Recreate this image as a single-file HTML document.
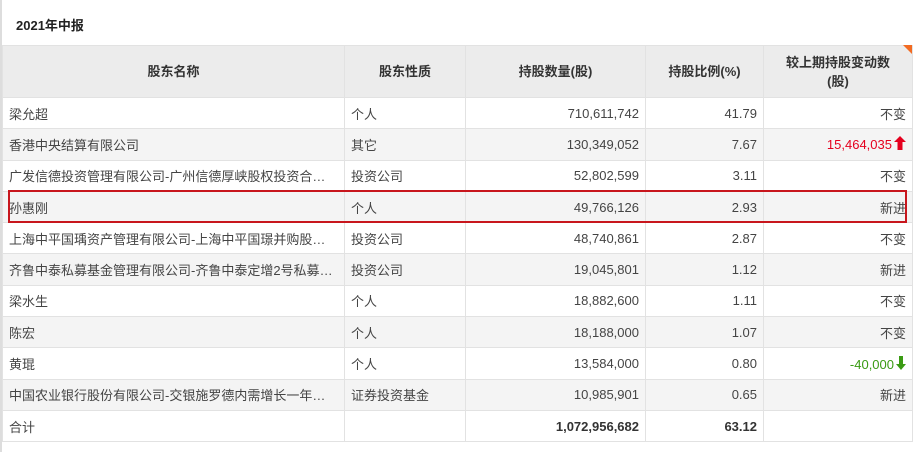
<!DOCTYPE html>
<html><head><meta charset="utf-8"><style>
body{margin:0;width:914px;height:452px;background:#fff;font-family:"Liberation Sans","Noto Sans CJK SC",sans-serif;color:#444;overflow:hidden;position:relative}
.lb{position:absolute;left:0;top:0;width:2px;height:452px;background:#ddd}
.title{position:absolute;left:16px;top:15px;font-size:13px;font-weight:bold;color:#222}
table{position:absolute;left:2px;top:45px;border-collapse:collapse;table-layout:fixed;width:910px;font-size:13px}
td,th{border:1px solid #e2e2e2;padding:0 6px;white-space:nowrap;overflow:hidden;text-overflow:ellipsis;height:31.3px;box-sizing:border-box}
th{background:#ececec;height:52px;font-weight:bold;color:#333;line-height:19px}
tr:nth-child(odd) td{background:#f4f4f4}
td.r{text-align:right}
td.b{font-weight:bold;color:#333}
.red{color:#e5001e}.grn{color:#3a9b13}
.box{position:absolute;left:8px;top:190px;width:895px;height:29px;border:2px solid #c8161d}
.tri{position:absolute;left:903px;top:45px;width:0;height:0;border-top:9px solid #f26b22;border-left:9px solid transparent}
</style></head><body>
<div class="lb"></div>
<div class="title">2021年中报</div>
<table>
<colgroup><col style="width:342px"><col style="width:121px"><col style="width:180px"><col style="width:118px"><col style="width:149px"></colgroup>
<tr><th>股东名称</th><th>股东性质</th><th>持股数量(股)</th><th>持股比例(%)</th><th>较上期持股变动数<br>(股)</th></tr>
<tr><td>梁允超</td><td>个人</td><td class="r">710,611,742</td><td class="r">41.79</td><td class="r">不变</td></tr>
<tr><td>香港中央结算有限公司</td><td>其它</td><td class="r">130,349,052</td><td class="r">7.67</td><td class="r red">15,464,035<svg width="12" height="14" viewBox="0 0 12 14" style="vertical-align:-1px;margin-left:2px"><path d="M6 0L12 6H8.5V14H3.5V6H0Z" fill="#e5001e"/></svg></td></tr>
<tr><td>广发信德投资管理有限公司-广州信德厚峡股权投资合伙企业</td><td>投资公司</td><td class="r">52,802,599</td><td class="r">3.11</td><td class="r">不变</td></tr>
<tr><td>孙惠刚</td><td>个人</td><td class="r">49,766,126</td><td class="r">2.93</td><td class="r">新进</td></tr>
<tr><td>上海中平国瑀资产管理有限公司-上海中平国璟并购股权投资</td><td>投资公司</td><td class="r">48,740,861</td><td class="r">2.87</td><td class="r">不变</td></tr>
<tr><td>齐鲁中泰私募基金管理有限公司-齐鲁中泰定增2号私募基金</td><td>投资公司</td><td class="r">19,045,801</td><td class="r">1.12</td><td class="r">新进</td></tr>
<tr><td>梁水生</td><td>个人</td><td class="r">18,882,600</td><td class="r">1.11</td><td class="r">不变</td></tr>
<tr><td>陈宏</td><td>个人</td><td class="r">18,188,000</td><td class="r">1.07</td><td class="r">不变</td></tr>
<tr><td>黄琨</td><td>个人</td><td class="r">13,584,000</td><td class="r">0.80</td><td class="r grn">-40,000<svg width="10" height="14" viewBox="0 0 10 14" style="vertical-align:-1px;margin-left:2px"><path d="M5 14L10 8H7V0H3V8H0Z" fill="#3a9b13"/></svg></td></tr>
<tr><td>中国农业银行股份有限公司-交银施罗德内需增长一年持有期混合</td><td>证券投资基金</td><td class="r">10,985,901</td><td class="r">0.65</td><td class="r">新进</td></tr>
<tr><td>合计</td><td></td><td class="r b">1,072,956,682</td><td class="r b">63.12</td><td></td></tr>
</table>
<div class="tri"></div>
<div class="box"></div>
</body></html>
